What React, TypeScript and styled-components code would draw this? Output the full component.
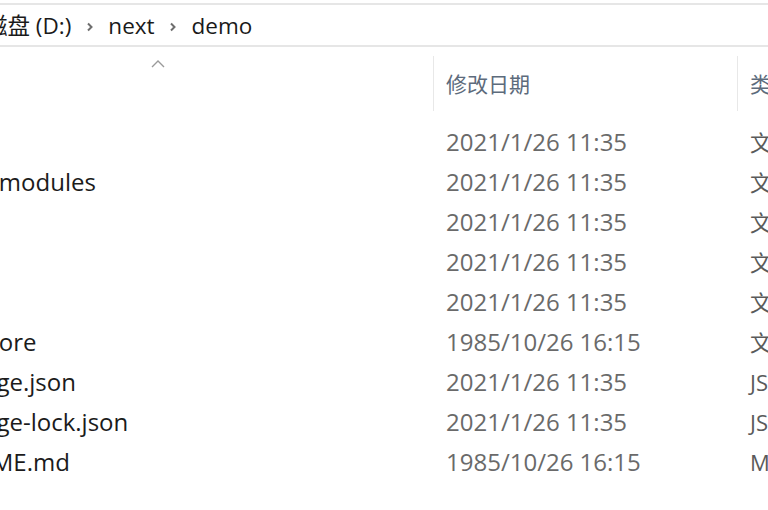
import React from "react";
import styled, { createGlobalStyle } from "styled-components";

const Global = createGlobalStyle`
  html, body { margin: 0; padding: 0; background: #ffffff; }
  body { font-family: "Open Sans", "Noto Sans CJK SC", sans-serif; overflow: hidden; }
`;

const Window = styled.div`
  width: 768px;
  height: 510px;
  overflow: hidden;
  background: #ffffff;
  padding-top: 3px;
  box-sizing: border-box;
`;

const AddressBar = styled.div`
  height: 40px;
  border-top: 2px solid #e6e6e6;
  border-bottom: 2px solid #e6e6e6;
  display: flex;
  align-items: center;
  font-size: 22.5px;
  color: #1a1a1a;
  white-space: nowrap;
  overflow: hidden;
`;

const Crumb = styled.span<{ $shift?: number }>`
  margin-left: ${(p) => p.$shift ?? 0}px;
  line-height: 1;
  padding-top: 2px;
`;

const Sep = styled.span`
  display: inline-flex;
  width: 37px;
  justify-content: center;
  align-items: center;
  padding-top: 3px;
`;

const Grid = styled.div`
  display: grid;
  grid-template-columns: 433px 304px 1fr;
`;

const Header = styled(Grid)`
  height: 74px;
`;

const NameHead = styled.div`
  position: relative;
`;

const SortArrow = styled.svg`
  position: absolute;
  left: 150px;
  top: 12px;
`;

const HeadCell = styled.div`
  display: flex;
  align-items: center;
  padding-left: 12px;
  margin: 9px 0 10px;
  border-left: 1px solid #e8e8e8;
  font-size: 21px;
  color: #5d6b7c;
  white-space: nowrap;
  overflow: hidden;
  padding-bottom: 2px;
`;

const Row = styled(Grid)`
  height: 40px;
  align-items: center;
  white-space: nowrap;
`;

const NameCell = styled.div`
  overflow: hidden;
  color: #1b1b1b;
  font-size: 24px;
`;

const NameText = styled.span`
  display: inline-block;
  margin-left: -69px;
`;

const DateCell = styled.div`
  padding-left: 13px;
  color: #6a6a6a;
  font-size: 24px;
  overflow: hidden;
`;

const TypeCell = styled.div`
  padding-left: 13px;
  color: #5a5a5a;
  font-size: 22px;
  overflow: hidden;
`;

const Chevron = () => (
  <svg width="10" height="14" viewBox="0 0 10 14">
    <path d="M3 3.5 L6.5 7 L3 10.5" fill="none" stroke="#6e6e6e" strokeWidth="2" />
  </svg>
);

const rows = [
  { name: ".next", date: "2021/1/26 11:35", type: "文件夹" },
  { name: "node_modules", date: "2021/1/26 11:35", type: "文件夹" },
  { name: "pages", date: "2021/1/26 11:35", type: "文件夹" },
  { name: "public", date: "2021/1/26 11:35", type: "文件夹" },
  { name: "styles", date: "2021/1/26 11:35", type: "文件夹" },
  { name: ".gitignore", date: "1985/10/26 16:15", type: "文件" },
  { name: "package.json", date: "2021/1/26 11:35", type: "JSON 文件" },
  { name: "package-lock.json", date: "2021/1/26 11:35", type: "JSON 文件" },
  { name: "README.md", date: "1985/10/26 16:15", type: "MD 文件" },
];

export default function App() {
  return (
    <Window>
      <Global />
      <AddressBar>
        <Crumb $shift={-60}>本地磁盘 (D:)</Crumb>
        <Sep>
          <Chevron />
        </Sep>
        <Crumb>next</Crumb>
        <Sep>
          <Chevron />
        </Sep>
        <Crumb>demo</Crumb>
      </AddressBar>
      <Header>
        <NameHead>
          <SortArrow width="16" height="10" viewBox="0 0 16 10">
            <path d="M2 8 L8 2 L14 8" fill="none" stroke="#9a9a9a" strokeWidth="1.4" />
          </SortArrow>
        </NameHead>
        <HeadCell>修改日期</HeadCell>
        <HeadCell>类型</HeadCell>
      </Header>
      {rows.map((r) => (
        <Row key={r.name}>
          <NameCell>
            <NameText>{r.name}</NameText>
          </NameCell>
          <DateCell>{r.date}</DateCell>
          <TypeCell>{r.type}</TypeCell>
        </Row>
      ))}
    </Window>
  );
}
